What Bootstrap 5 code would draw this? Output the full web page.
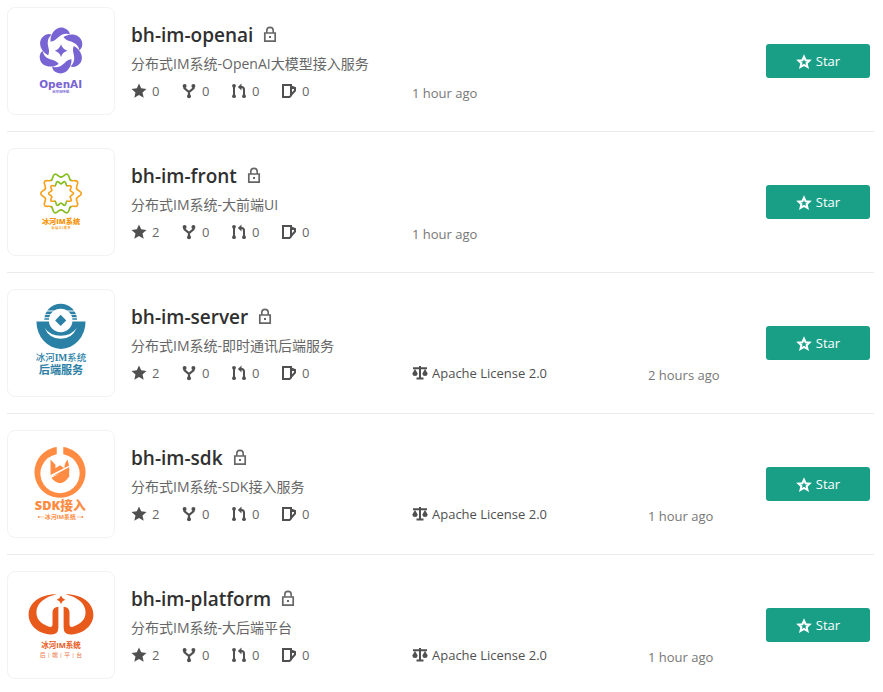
<!DOCTYPE html>
<html lang="zh-CN">
<head>
<meta charset="utf-8">
<meta name="viewport" content="width=device-width, initial-scale=1">
<title>Repositories</title>
<link href="https://cdn.jsdelivr.net/npm/bootstrap@5.3.0/dist/css/bootstrap.min.css" rel="stylesheet">
<style>
body{font-family:"Open Sans","Noto Sans CJK SC",sans-serif;font-size:13px;line-height:20px;color:#40485b;background:#fff}
.repo-list{padding:7px 9px 0 7px}
.repo{padding-bottom:16px;margin-bottom:16px;border-bottom:1px solid #ebebeb;padding-right:4px}
.repo:last-child{border-bottom:0;margin-bottom:0}
.logo{width:108px;height:108px;border:1px solid #f2f2f2;border-radius:8px;overflow:hidden}
.logo svg{display:block;width:100%;height:100%}
.logo text{text-anchor:middle;font-family:"Open Sans","Noto Sans CJK SC",sans-serif}
.logo .wide-text{font-family:"DejaVu Sans",sans-serif}
.logo .serif-text{font-family:"Liberation Serif","Noto Sans CJK SC",serif}
.info{flex:0 0 281px;padding-top:14px}
.name-row{gap:10px}
.repo-name{font-size:19px;line-height:28px;font-weight:600;color:#303030;text-decoration:none}
.lock{width:14px;height:18px;color:#666}
.desc{font-size:14px;line-height:20px;color:#666;margin-top:5px;white-space:nowrap}
.stats{margin-top:7px;height:20px}
.stat{width:50px;color:#666;text-decoration:none;font-size:13px;gap:5px}
.stat svg,.license svg{width:16px;height:16px;color:#505050;flex:none}
.meta{padding-top:73px}
.license{flex:0 0 236px;height:22px;color:#505050;text-decoration:none}
.when{color:#777;padding-top:3px;white-space:nowrap}
.btn-star{width:104px;height:34px;background:#1a9f87;color:#fff;border-radius:3px;font-size:13px;padding:1px 0 0;margin-top:37px;flex:none}
.btn-star:hover{background:#168a75;color:#fff}
.btn-star svg{width:16px;height:16px}
</style>
<script src="https://cdn.jsdelivr.net/npm/bootstrap@5.3.0/dist/js/bootstrap.bundle.min.js"></script>
</head>
<body>
<svg class="d-none" xmlns="http://www.w3.org/2000/svg">
<symbol id="i-lock" viewBox="0 0 14 18"><path d="M1.800 7h10.400v8.200H1.800z" fill="none" stroke="currentColor" stroke-width="1.700"/><path d="M3.800 7V4.600a3.200 3.200 0 0 1 6.400 0V7" fill="none" stroke="currentColor" stroke-width="1.600"/><path d="M6 10h2v2H6z" fill="currentColor"/></symbol>
<symbol id="i-star" viewBox="0 0 16 16"><path d="M8 .6l2.200 4.700 5.300.6-4 3.500 1.200 5.400L8 12.100l-4.700 2.700 1.200-5.400L.5 5.900l5.300-.6z" fill="currentColor"/></symbol>
<symbol id="i-star-o" viewBox="0 0 16 16"><path d="M8 2.700l1.600 3.500 3.900.4-2.900 2.600.9 3.800L8 11l-3.500 2 .9-3.800-2.900-2.600 3.900-.4z" fill="none" stroke="currentColor" stroke-width="2"/></symbol>
<symbol id="i-fork" viewBox="0 0 16 16"><path d="M3.500 3v2.300L8 9l4.500-3.700V3M8 9v4" fill="none" stroke="currentColor" stroke-width="2.200"/><circle cx="3.600" cy="2.900" r="2" fill="currentColor"/><circle cx="12.400" cy="2.900" r="2" fill="currentColor"/><circle cx="8" cy="13.200" r="2" fill="currentColor"/></symbol>
<symbol id="i-pr" viewBox="0 0 16 16"><path d="M3 3v10M13 13V6.500Q13 4 10.500 4H9" fill="none" stroke="currentColor" stroke-width="2"/><path d="M10.500.5v7L6.800 4z" fill="currentColor"/><circle cx="3" cy="2.800" r="1.900" fill="currentColor"/><circle cx="3" cy="13.200" r="1.900" fill="currentColor"/><circle cx="13" cy="13.200" r="1.900" fill="currentColor"/></symbol>
<symbol id="i-cup" viewBox="0 0 16 16"><path d="M2 2h8v10.500L8.500 14H2zM10 3.500l4 1.500v2.500l-4 4.500" fill="none" stroke="currentColor" stroke-width="2"/></symbol>
<symbol id="i-scale" viewBox="0 0 16 16"><path d="M1 2.300h14v2H1zM7 1h2v12H7zM4.500 12.500h7v2h-7zM3 4l2.700 4.500Q5.500 11 3 11T.3 8.500zM13 4l2.700 4.500Q15.500 11 13 11t-2.700-2.500z" fill="currentColor"/></symbol>
</svg>
<main class="repo-list">

<article class="repo d-flex">
<a class="logo flex-shrink-0 me-3" href="#" aria-label="bh-im-openai logo"><svg viewBox="21 21 324 324" fill="#7864d2">
<defs><path id="petal" d="M151 124C149 98 170 75 192 82C204 86 210 93 210 102C197 97 184 101 172 113C165 120 158 124 151 124z"/></defs>
<use href="#petal"/><use href="#petal" transform="rotate(60 183 151)"/><use href="#petal" transform="rotate(120 183 151)"/><use href="#petal" transform="rotate(180 183 151)"/><use href="#petal" transform="rotate(240 183 151)"/><use href="#petal" transform="rotate(300 183 151)"/>
<path d="M183 132Q187 147 203 152Q187 157 183 171Q179 157 164 152Q179 147 183 132z"/>
<text class="wide-text" x="182" y="266" font-size="32" font-weight="700">OpenAI</text><text x="182" y="282" font-size="10" font-weight="700">冰河IM系统</text></svg></a>
<div class="info"><div class="name-row d-flex align-items-center"><a class="repo-name" href="#">bh-im-openai</a><svg class="lock"><use href="#i-lock"/></svg></div>
<div class="desc">分布式IM系统-OpenAI大模型接入服务</div>
<div class="stats d-flex"><a class="stat d-flex align-items-center" href="#"><svg><use href="#i-star"/></svg>0</a><a class="stat d-flex align-items-center" href="#"><svg><use href="#i-fork"/></svg>0</a><a class="stat d-flex align-items-center" href="#"><svg><use href="#i-pr"/></svg>0</a><a class="stat d-flex align-items-center" href="#"><svg><use href="#i-cup"/></svg>0</a></div></div>
<div class="meta d-flex flex-grow-1"><span class="when">1 hour ago</span></div>
<button type="button" class="btn btn-star d-flex align-items-center justify-content-center gap-1"><svg><use href="#i-star-o"/></svg>Star</button>
</article>

<article class="repo d-flex">
<a class="logo flex-shrink-0 me-3" href="#" aria-label="bh-im-front logo"><svg viewBox="21 18 324 324">
<defs><path id="wave" d="M47.600-15.500C50-8 62-8 62 0S50 8 47.600 15.500M28.500-9.300C30-4.500 38-5 38 0S30 4.500 28.500 9.300"/></defs>
<g transform="translate(183 154)" fill="none" stroke-width="5" stroke-linecap="round"><g stroke="#f8a01c"><use href="#wave"/><use href="#wave" transform="rotate(36)"/><use href="#wave" transform="rotate(144)"/><use href="#wave" transform="rotate(180)"/><use href="#wave" transform="rotate(216)"/><use href="#wave" transform="rotate(324)"/></g><g stroke="#84bd20"><use href="#wave" transform="rotate(72)"/><use href="#wave" transform="rotate(108)"/><use href="#wave" transform="rotate(252)"/><use href="#wave" transform="rotate(288)"/></g></g>
<g fill="#f8950c"><text x="183" y="248" font-size="22" font-weight="800">冰河IM系统</text><text x="183" y="264" font-size="9" font-weight="700">前 端 U I 项 目</text></g></svg></a>
<div class="info"><div class="name-row d-flex align-items-center"><a class="repo-name" href="#">bh-im-front</a><svg class="lock"><use href="#i-lock"/></svg></div>
<div class="desc">分布式IM系统-大前端UI</div>
<div class="stats d-flex"><a class="stat d-flex align-items-center" href="#"><svg><use href="#i-star"/></svg>2</a><a class="stat d-flex align-items-center" href="#"><svg><use href="#i-fork"/></svg>0</a><a class="stat d-flex align-items-center" href="#"><svg><use href="#i-pr"/></svg>0</a><a class="stat d-flex align-items-center" href="#"><svg><use href="#i-cup"/></svg>0</a></div></div>
<div class="meta d-flex flex-grow-1"><span class="when">1 hour ago</span></div>
<button type="button" class="btn btn-star d-flex align-items-center justify-content-center gap-1"><svg><use href="#i-star-o"/></svg>Star</button>
</article>

<article class="repo d-flex">
<a class="logo flex-shrink-0 me-3" href="#" aria-label="bh-im-server logo"><svg viewBox="21 18 324 324" fill="#2b80a5">
<path d="M132 110a50 50 0 0 1 100 0z"/><path d="M130 81h104v3H130zM130 91h104v3H130zM130 101h104v3H130zM130 109h104v5H130z" fill="#fff"/>
<path d="M108 114H258A75 84 0 0 1 108 114z"/><circle cx="182" cy="111" r="36" fill="#fff"/>
<path d="M182 94l17 17-17 17-17-17z"/><path d="M133 134Q150 158 182 158T231 134Q217 167 182 167T133 134z" fill="#fff"/>
<text class="serif-text" x="183" y="236" font-size="29" font-weight="500"><tspan>冰河</tspan><tspan font-weight="700">IM</tspan><tspan>系统</tspan></text><text x="183" y="274" font-size="34" font-weight="700">后端服务</text></svg></a>
<div class="info"><div class="name-row d-flex align-items-center"><a class="repo-name" href="#">bh-im-server</a><svg class="lock"><use href="#i-lock"/></svg></div>
<div class="desc">分布式IM系统-即时通讯后端服务</div>
<div class="stats d-flex"><a class="stat d-flex align-items-center" href="#"><svg><use href="#i-star"/></svg>2</a><a class="stat d-flex align-items-center" href="#"><svg><use href="#i-fork"/></svg>0</a><a class="stat d-flex align-items-center" href="#"><svg><use href="#i-pr"/></svg>0</a><a class="stat d-flex align-items-center" href="#"><svg><use href="#i-cup"/></svg>0</a></div></div>
<div class="meta d-flex flex-grow-1"><a class="license d-flex align-items-center gap-1" href="#"><svg><use href="#i-scale"/></svg>Apache License 2.0</a><span class="when">2 hours ago</span></div>
<button type="button" class="btn btn-star d-flex align-items-center justify-content-center gap-1"><svg><use href="#i-star-o"/></svg>Star</button>
</article>

<article class="repo d-flex">
<a class="logo flex-shrink-0 me-3" href="#" aria-label="bh-im-sdk logo"><svg viewBox="21 18 324 324" fill="#ff8c42">
<path d="M170 67A78 78 0 1 0 190 67V89A60 60 0 1 1 170 89z"/>
<path d="M151 105L166 121V132L180 123L193 132L195 118L203 105L208 125V140L151 158z"/><path d="M208 134V156Q198 174 180 178Q162 174 154 161z"/><path d="M148 154L210 123V127L151 159z" fill="#fff"/>
<text x="181" y="261" font-size="39" font-weight="800">SDK接入</text><path d="M118 280h14v2h-14zM232 280h14v2h-14z"/><circle cx="115" cy="281" r="3"/><circle cx="248" cy="281" r="3"/><text x="181" y="287" font-size="18" font-weight="700">冰河IM系统</text></svg></a>
<div class="info"><div class="name-row d-flex align-items-center"><a class="repo-name" href="#">bh-im-sdk</a><svg class="lock"><use href="#i-lock"/></svg></div>
<div class="desc">分布式IM系统-SDK接入服务</div>
<div class="stats d-flex"><a class="stat d-flex align-items-center" href="#"><svg><use href="#i-star"/></svg>2</a><a class="stat d-flex align-items-center" href="#"><svg><use href="#i-fork"/></svg>0</a><a class="stat d-flex align-items-center" href="#"><svg><use href="#i-pr"/></svg>0</a><a class="stat d-flex align-items-center" href="#"><svg><use href="#i-cup"/></svg>0</a></div></div>
<div class="meta d-flex flex-grow-1"><a class="license d-flex align-items-center gap-1" href="#"><svg><use href="#i-scale"/></svg>Apache License 2.0</a><span class="when">1 hour ago</span></div>
<button type="button" class="btn btn-star d-flex align-items-center justify-content-center gap-1"><svg><use href="#i-star-o"/></svg>Star</button>
</article>

<article class="repo d-flex">
<a class="logo flex-shrink-0 me-3" href="#" aria-label="bh-im-platform logo"><svg viewBox="21 18 324 324" fill="#e85a1c">
<defs><path id="wing" d="M170 86C118 85 84 114 84 148C84 182 114 206 150 209Q175 211 175 188V124Q157 125 157 142V180Q155 190 143 184C120 175 107 162 108 139C109 113 134 94 170 86z"/></defs>
<use href="#wing"/><use href="#wing" transform="translate(366 0) scale(-1 1)"/><path d="M183 90Q186 100 196 103Q186 106 183 116Q180 106 170 103Q180 100 183 90z"/>
<text x="183" y="249" font-size="23" font-weight="700">冰河IM系统</text><text x="183" y="279" font-size="18" opacity=".85">后 | 端 | 平 | 台</text></svg></a>
<div class="info"><div class="name-row d-flex align-items-center"><a class="repo-name" href="#">bh-im-platform</a><svg class="lock"><use href="#i-lock"/></svg></div>
<div class="desc">分布式IM系统-大后端平台</div>
<div class="stats d-flex"><a class="stat d-flex align-items-center" href="#"><svg><use href="#i-star"/></svg>2</a><a class="stat d-flex align-items-center" href="#"><svg><use href="#i-fork"/></svg>0</a><a class="stat d-flex align-items-center" href="#"><svg><use href="#i-pr"/></svg>0</a><a class="stat d-flex align-items-center" href="#"><svg><use href="#i-cup"/></svg>0</a></div></div>
<div class="meta d-flex flex-grow-1"><a class="license d-flex align-items-center gap-1" href="#"><svg><use href="#i-scale"/></svg>Apache License 2.0</a><span class="when">1 hour ago</span></div>
<button type="button" class="btn btn-star d-flex align-items-center justify-content-center gap-1"><svg><use href="#i-star-o"/></svg>Star</button>
</article>
</main>
</body>
</html>
